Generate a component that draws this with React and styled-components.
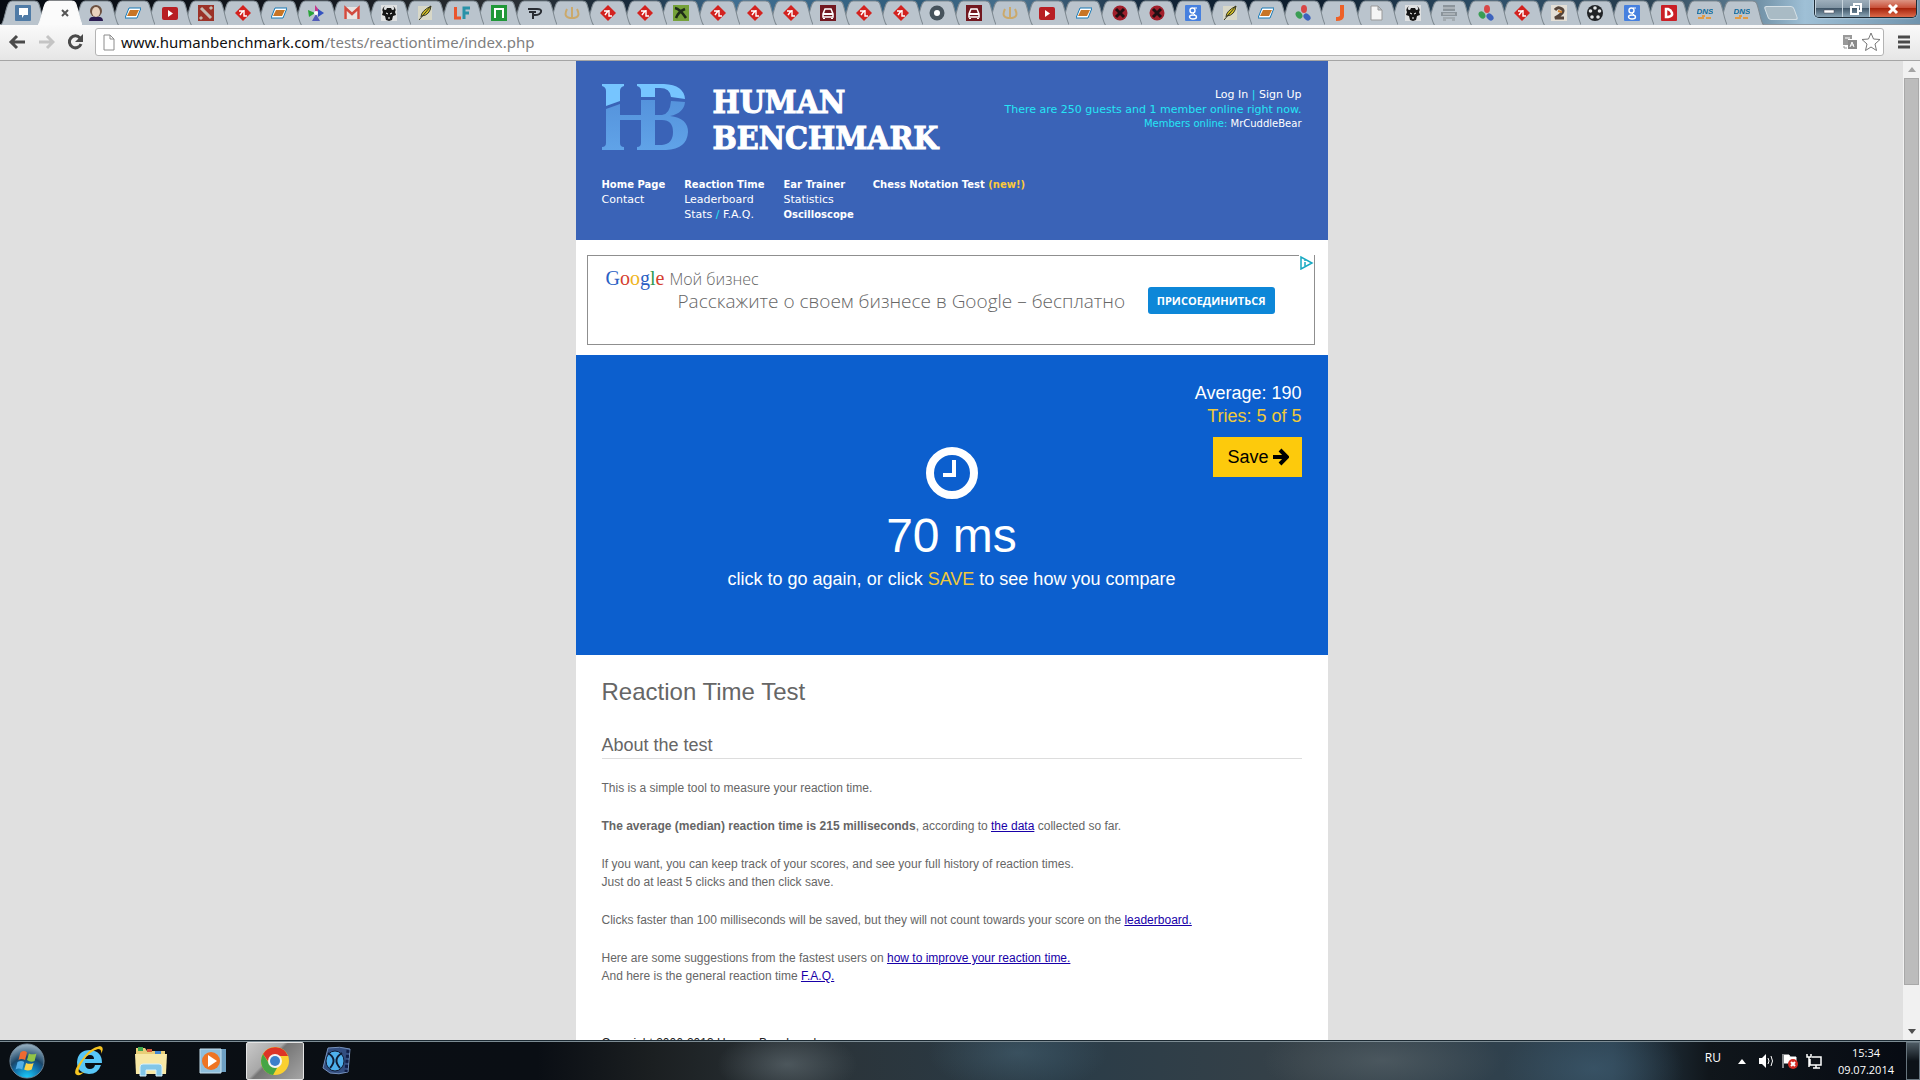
import React from 'react'
import styled, { createGlobalStyle, css } from 'styled-components'

const GlobalStyle = createGlobalStyle`
    * { box-sizing: border-box; }
    body {
        margin: 0;
        overflow: hidden;
        font-family: "Liberation Sans", Arial, sans-serif;
    }
    button { font-family: inherit; }
    h1, h2, p, ul { margin: 0; padding: 0; }
`

const Screen = styled.div`
    display: flex;
    flex-direction: column;
    height: 100vh;
    background: #e0e0e0;
`

/* ---------- tab strip ---------- */

const TabStrip = styled.header`
    display: flex;
    justify-content: space-between;
    height: 25px;
    flex: none;
    padding-left: 5px;
    border-bottom: 1px solid #8f979e;
    background: linear-gradient(90deg, #060b12 0%, #15191f 17%, #2b2f33 26%, #182b3c 33%, #3f6f92 38%, #2f5c7a 48%, #4a7390 53%, #122538 60%, #0d1c2b 68%, #30526c 78%, #243a4b 85%, #547388 90%, #9fc0d6 94%, #6f93ad 100%);
`
const Tabs = styled.nav`
    display: flex;
    flex: 1;
`
const TabButton = styled.button`
    position: relative;
    z-index: ${p => p.$order};
    flex: 1 1 0;
    min-width: 0;
    height: 24px;
    padding: 2px 0 0;
    border: 0;
    background: none;
    display: flex;
    align-items: center;
    justify-content: center;
`
const TabShape = styled.svg`
    position: absolute;
    left: -4px;
    top: 0;
    width: calc(100% + 8px);
    height: 25px;
`
const Favicon = styled.svg`
    position: relative;
    flex: none;
    width: 16px;
    height: 16px;
    margin-left: ${p => p.$active ? '10px' : '0'};
`
const NewTab = styled.button`
    width: 30px;
    height: 14px;
    margin: 6px 18px 0 6px;
    border: 1px solid #d5e0e6;
    border-radius: 3px;
    background: #a9bbc5;
    transform: skewX(20deg);
`
const WindowButtons = styled.div`
    display: flex;
    height: 18px;
    margin-right: 3px;
    border: 1px solid #1d2b36;
    border-top: 0;
    border-radius: 0 0 5px 5px;
    overflow: hidden;
    box-shadow: 0 0 2px #dfeaf2;
`
const WindowButton = styled.button`
    display: flex;
    align-items: center;
    justify-content: center;
    width: ${p => p.$close ? '47px' : '27px'};
    padding: 0;
    border: 0;
    border-left: 1px solid #c7d4dd;
    background: linear-gradient(#9eafbc 0, #8296a5 45%, #42586a 50%, #8ba5b6 100%);
    ${p => p.$close && css`
        background: linear-gradient(#dd9483 0, #c9513a 45%, #a8240c 50%, #dd6a4a 100%);
    `}
`

/* ---------- toolbar ---------- */

const Toolbar = styled.div`
    display: flex;
    align-items: center;
    flex: none;
    height: 36px;
    padding: 0 8px 1px;
    border-bottom: 1px solid #a5a5a5;
    background: linear-gradient(#fafafa, #e6e6e6);
`
const NavButton = styled.button`
    display: flex;
    width: 18px;
    height: 18px;
    margin-right: 11px;
    padding: 0;
    border: 0;
    background: none;
`
const AddressBar = styled.div`
    display: flex;
    align-items: center;
    flex: 1;
    height: 28px;
    padding: 0 2px 0 7px;
    border: 1px solid #b4b4b4;
    border-radius: 3px;
    background: #fff;
`
const Url = styled.a`
    flex: 1;
    margin-left: 6px;
    font: 15px/24px "Noto Sans", "Open Sans", sans-serif;
    color: #808080;
    text-decoration: none;
    b { font-weight: 400; color: #111; }
`
const BarButton = styled.button`
    display: flex;
    margin-left: 2px;
    padding: 0;
    border: 0;
    background: none;
`
const MenuButton = styled(BarButton)`
    margin-left: 12px;
`

/* ---------- page ---------- */

const Viewport = styled.div`
    display: flex;
    flex: 1;
    min-height: 0;
`
const Page = styled.main`
    flex: 1;
    overflow: hidden;
`
const Column = styled.div`
    max-width: 752px;
    margin: 0 auto;
    background: #fff;
`
const Scrollbar = styled.div`
    display: flex;
    flex-direction: column;
    width: 17px;
    background: #f1f1f1;
`
const ScrollArrow = styled.button`
    display: flex;
    align-items: center;
    justify-content: center;
    height: 17px;
    padding: 0;
    border: 0;
    background: none;
`
const ScrollTrack = styled.div`
    flex: 1;
    padding: 0 1px;
`
const ScrollThumb = styled.div`
    height: 96%;
    border: 1px solid #a8a8a8;
    background: #bcbcbc;
`

const Masthead = styled.header`
    padding: 23px 26px 9px;
    background: #3a63b7;
    color: #25e6f5;
    font: 11px/15px Verdana, "DejaVu Sans", sans-serif;
    a { color: #fff; text-decoration: none; }
`
const MastheadTop = styled.div`
    display: flex;
    justify-content: space-between;
`
const Brand = styled.a`
    display: flex;
    gap: 24px;
`
const BrandName = styled.span`
    color: #fff;
    font: bold 32px/36px "DejaVu Serif Condensed", "DejaVu Serif", serif;
    -webkit-text-stroke: 1px #fff;
`
const Account = styled.div`
    padding-top: 3px;
    text-align: right;
`
const Members = styled.div`
    font-size: 10px;
    line-height: 13px;
`
const Menu = styled.nav`
    display: flex;
    gap: 19px;
    margin-top: 21px;
    min-height: 54px;
`
const MenuColumn = styled.ul`
    list-style: none;
`
const MenuItem = styled.li`
    font-size: ${p => p.$bold ? '10px' : '11px'};
    font-weight: ${p => p.$bold ? 'bold' : 'normal'};
    em { font-style: normal; color: #fbc93c; }
`

const AdSlot = styled.aside`
    padding: 15px 13px 10px 11px;
`
const Ad = styled.div`
    position: relative;
    display: flex;
    align-items: flex-start;
    height: 90px;
    padding: 10px 39px 0 18px;
    border: 1px solid #8f8f8f;
    font-family: "Open Sans", "Noto Sans", sans-serif;
    font-weight: 300;
    color: #666;
`
const AdText = styled.div`
    flex: 1;
    white-space: nowrap;
`
const AdBrand = styled.div`
    display: flex;
    align-items: baseline;
    gap: 5px;
    font-size: 16px;
    line-height: 24px;
`
const GoogleWord = styled.span`
    font: 20px/24px "Liberation Serif", serif;
`
const Letter = styled.span`
    color: ${p => p.$color};
`
const AdLine = styled.div`
    padding-left: 72px;
    font-size: 19px;
    line-height: 20px;
`
const JoinButton = styled.button`
    height: 27px;
    margin-top: 21px;
    padding: 0 9px;
    border: 0;
    border-radius: 3px;
    background: #0d87d8;
    color: #fff;
    font: bold 11px "Open Sans", "Noto Sans", sans-serif;
`
const AdChoices = styled.svg`
    position: absolute;
    right: 0;
    top: -1px;
    width: 15px;
    height: 15px;
    background: #fff;
`

const Stage = styled.section`
    height: 300px;
    padding: 27px 26px 26px;
    background: #0c5fce;
    color: #fff;
    font-size: 18px;
    line-height: 23px;
`
const Score = styled.div`
    display: flex;
    flex-direction: column;
    align-items: flex-end;
    height: 65px;
`
const Gold = styled.span`
    color: #f0c93a;
`
const SaveButton = styled.button`
    display: flex;
    align-items: center;
    gap: 4px;
    flex: none;
    height: 40px;
    margin-top: 9px;
    padding: 0 13px 0 14px;
    border: 0;
    background: #fdca0c;
    color: #000;
    font-size: 18px;
`
const Result = styled.div`
    display: flex;
    flex-direction: column;
    align-items: center;
`
const Time = styled.div`
    margin: 9px 0 4px;
    font-size: 48px;
    line-height: 56px;
`

const Article = styled.article`
    padding: 24px 26px 0;
    color: #666;
    font-size: 12px;
    line-height: 18px;
    a { color: #1800a8; }
`
const Title = styled.h1`
    font-size: 24px;
    font-weight: 400;
    line-height: 26px;
`
const Subtitle = styled.h2`
    margin: 28px 0 20px;
    padding-bottom: 1px;
    border-bottom: 1px solid #ddd;
    font-size: 18px;
    font-weight: 400;
    line-height: 24px;
`
const Paragraph = styled.p`
    margin-bottom: 20px;
`
const Copyright = styled.footer`
    padding: 29px 0 40px;
    color: #222;
`

/* ---------- taskbar ---------- */

const Taskbar = styled.footer`
    display: flex;
    align-items: center;
    flex: none;
    height: 40px;
    padding-left: 8px;
    border-top: 1px solid #1c2a33;
    box-shadow: inset 0 1px #7d8c94;
    color: #fff;
    background:
        radial-gradient(ellipse 70px 34px at 41% 60%, #64707699, transparent),
        radial-gradient(ellipse 90px 40px at 53% 30%, #51728566, transparent),
        radial-gradient(ellipse 120px 40px at 72% 50%, #5a666c99, transparent),
        radial-gradient(ellipse 90px 50px at 83% 70%, #3f5d7299, transparent),
        linear-gradient(90deg, #0a0f14 0, #0a0e14 28%, #1b1f21 34%, #2b3338 42%, #2a3c48 55%, #364148 68%, #2c4150 84%, #10161b 89%, #060a12 100%);
`
const TaskButton = styled.button`
    display: flex;
    align-items: center;
    justify-content: center;
    width: ${p => p.$start ? '38px' : '58px'};
    margin-right: ${p => p.$start ? '14px' : '4px'};
    height: 38px;
    padding: 0;
    border: 1px solid transparent;
    border-radius: 2px;
    background: none;
    ${p => p.$active && css`
        border-color: #e5e5e5;
        background: linear-gradient(135deg, #c9c9c9 0, #a8a8a8 40%, #757575 45%, #a5a5a5 100%);
    `}
`
const Tray = styled.div`
    display: flex;
    align-items: center;
    margin-left: auto;
    gap: 8px;
    font: 12px/17px "Open Sans", "Noto Sans", sans-serif;
`
const Language = styled.span`
    margin: 0 5px 6px 0;
`
const Clock = styled.time`
    margin-left: 8px;
    text-align: center;
    font-size: 11px;
`
const ShowDesktop = styled.button`
    width: 14px;
    height: 38px;
    margin-left: 4px;
    padding: 0;
    border: 1px solid #67757e;
    background: linear-gradient(#4d5a63, #0c1218 50%);
`

/* ---------- drawings ---------- */

const favicons = {
    chat: <><rect width="16" height="16" rx="1" fill="#4f7ba6" /><path d="M4 3h9v7H9l-2 3v-3H4z" fill="#fff" /></>,
    close: <path d="M5 5l6 6M11 5l-6 6" stroke="#555" strokeWidth="2" />,
    avatar: <><ellipse cx="8" cy="6" rx="6" ry="6" fill="#6d5140" /><ellipse cx="8" cy="7" rx="4" ry="5" fill="#ead3be" /><path d="M1 16q0-5 7-4 7-1 7 4z" fill="#2a1b50" /></>,
    slab: <><path d="M4 3h12l-4 10H0z" fill="#fff" stroke="#1678b5" /><path d="M5 5h9l-3 6H2z" fill="#c87525" /></>,
    tube: <><rect y="2" width="16" height="13" rx="2" fill="#b81f24" /><path d="M6 5l5 3.500-5 3.500z" fill="#fff" /></>,
    dota: <><rect width="16" height="16" fill="#9b3228" /><path d="M3 3l10 10M12 2l2 2M2 12l2 2" stroke="#c6bbb2" strokeWidth="3" /></>,
    ruby: <><path d="M8 0l8 8-8 8-8-8z" fill="#d3221f" /><path d="M4 6h4l-3 4M9 5v6h3" stroke="#fff" strokeWidth="1.400" fill="none" /></>,
    spark: <><path d="M7 0l4 5-4 3z" fill="#c43a8b" /><path d="M0 5l7 3-6 4z" fill="#28a438" /><path d="M10 4l6 4-6 4z" fill="#3452c0" /><path d="M4 16l4-7 4 7z" fill="#525cb8" /><circle cx="8" cy="8" r="2" fill="#fff" /></>,
    mail: <><rect y="2" width="16" height="12" fill="#e8e4e2" /><path d="M1.500 14V3L8 9l6.500-6v11" fill="none" stroke="#d14b3f" strokeWidth="2.500" /></>,
    bull: <><rect width="16" height="16" fill="#dfe1e2" /><path d="M4 1Q1 5 5 5l1-2h4l1 2q4 0 1-4 4 3 2 6l1 3-3 1-1 4-3 1-3-1-1-4-3-1 1-3Q0 4 4 1z" fill="#151515" /><path d="M5 8l2 1M11 8L9 9M7 13h2" stroke="#fff" /></>,
    feather: <><rect x="1" y="1" width="14" height="14" fill="#d8d8c8" /><path d="M2 15L14 1M4 12q0-6 10-11-1 9-9 10" fill="#d5c125" stroke="#353622" /></>,
    lf: <><path d="M1.500 2v11H7" fill="none" stroke="#ea552d" strokeWidth="3" /><path d="M10 14V3h6M10 8h5" fill="none" stroke="#2892a8" strokeWidth="3" /></>,
    gate: <><rect width="16" height="16" fill="#209838" /><path d="M4 13V4h8v9M4 4h8" fill="none" stroke="#fff" strokeWidth="2" /></>,
    pen: <path d="M1 4h9q5 0 4 3-1 3-6 3H5M2 7h7M6 8v6" fill="none" stroke="#292d33" strokeWidth="2" />,
    crown: <path d="M3 4q-4 8 3 9h4q7-1 3-9M8 2v10" fill="none" stroke="#cba96b" strokeWidth="2" />,
    cross: <><rect width="16" height="16" fill="#75a139" /><path d="M2 3q5 1 11 10M3 13q2-6 9-9" stroke="#1e2c19" strokeWidth="2.500" fill="none" /></>,
    car: <><rect width="16" height="16" fill="#721820" /><path d="M5 4h6l2 5v3H3V9z" fill="none" stroke="#fff" strokeWidth="1.500" /><path d="M4 13v1M12 13v1M3 9h10" stroke="#fff" strokeWidth="2" /></>,
    ring: <><circle cx="8" cy="8" r="7.500" fill="#46535c" /><circle cx="8" cy="8" r="3" fill="#fff" /></>,
    bug: <><circle cx="8" cy="8" r="7.500" fill="#a11f2b" /><path d="M4 4l8 8M12 4l-8 8" stroke="#210f13" strokeWidth="3" /></>,
    gee: <><rect width="16" height="16" rx="1" fill="#4680df" /><circle cx="7.500" cy="5.500" r="2.500" fill="none" stroke="#fff" strokeWidth="1.400" /><ellipse cx="8" cy="12" rx="3.500" ry="2" fill="none" stroke="#fff" strokeWidth="1.400" /><path d="M9 3h3M8 8l2 2" stroke="#fff" /></>,
    petals: <><ellipse cx="9" cy="4" rx="3" ry="4" fill="#d84646" /><ellipse cx="4" cy="10" rx="3" ry="4" fill="#3a9d54" transform="rotate(-35 4 10)" /><ellipse cx="12" cy="12" rx="3" ry="4" fill="#3d63bd" transform="rotate(-45 12 12)" /></>,
    hook: <path d="M8 0h4v11q0 5-8 5v-4q4 0 4-2z" fill="#ee6127" />,
    sheet: <path d="M3 1h7l4 4v10H3zM10 1v4h4" fill="#f5f5f5" stroke="#999" />,
    cart: <><path d="M2 0h12v6H2zM0 7h16v4H0z" fill="#8b949b" /><path d="M2 3h12M2 9h12" stroke="#c9ced2" /><path d="M2 12h12v4h-3v-2H5v2H2z" fill="#a3abb1" /></>,
    snake: <><rect width="16" height="16" fill="#e4dfd6" /><path d="M4 5q3-4 7-1t-7 9h9" fill="none" stroke="#54443a" strokeWidth="3" /><path d="M7 6l4 1" stroke="#d5832c" strokeWidth="2" /></>,
    film: <><circle cx="8" cy="8" r="8" fill="#202326" />{[[8, 3], [12.5, 6], [11, 12], [5, 12], [3.5, 6]].map(([x, y]) => <circle key={x} cx={x} cy={y} r="1.800" fill="#e2e5e7" />)}</>,
    dee: <><rect width="16" height="16" rx="1" fill="#ca1f26" /><path d="M5 4v8h2q5-1 4-4t-4-4z" fill="none" stroke="#fff" strokeWidth="2.500" /></>,
    dns: <><text x="8" y="9" textAnchor="middle" fontSize="8" fontWeight="bold" fontStyle="italic" fontFamily="Liberation Sans, sans-serif" fill="#0e6a9c">DNS</text><path d="M1 13h6M9 13h5M5 11h3" stroke="#e29b45" strokeWidth="2" /></>,
}

const tabs = [
    ['chat', 'Messages'], ['close', 'Reaction Time Test'], ['avatar', 'Profile'], ['slab', 'Board'],
    ['tube', 'Video'], ['dota', 'Game'], ['ruby', 'News'], ['slab', 'Board'], ['spark', 'Gallery'],
    ['mail', 'Mail'], ['bull', 'Forum'], ['feather', 'Notes'], ['lf', 'Films'], ['gate', 'Portal'],
    ['pen', 'Blog'], ['crown', 'Shop'], ['ruby', 'News'], ['ruby', 'News'], ['cross', 'Match'],
    ['ruby', 'News'], ['ruby', 'News'], ['ruby', 'News'], ['car', 'Cars'], ['ruby', 'News'],
    ['ruby', 'News'], ['ring', 'Player'], ['car', 'Cars'], ['crown', 'Shop'], ['tube', 'Video'],
    ['slab', 'Board'], ['bug', 'Tracker'], ['bug', 'Tracker'], ['gee', 'Search'], ['feather', 'Notes'],
    ['slab', 'Board'], ['petals', 'Photos'], ['hook', 'Journal'], ['sheet', 'Page'], ['bull', 'Forum'],
    ['cart', 'Cart'], ['petals', 'Photos'], ['ruby', 'News'], ['snake', 'Stories'], ['film', 'Cinema'],
    ['gee', 'Search'], ['dee', 'Daily'], ['dns', 'Store'], ['dns', 'Store'],
]

const Tab = ({ icon, label, order, active }) => (
    <TabButton $order={active ? 60 : order} aria-label={label}>
        <TabShape viewBox="0 0 44 25" preserveAspectRatio="none">
            <path
                d="M0 25C3 23 5 5 8 2.500Q9 1 11 1H33Q36 1 37 3C40 10 41 22 44 25"
                fill={active ? '#fbfbfb' : '#bac4cd'}
                stroke={active ? '#fbfbfb' : '#7e8991'}
            />
        </TabShape>
        <Favicon $active={active} viewBox="0 0 16 16">{favicons[icon]}</Favicon>
    </TabButton>
)

const HbMark = () => (
    <svg width="87" height="66" viewBox="0 0 87 66">
        <defs>
            <linearGradient id="low" x1="0" y1="0" x2="0" y2="1">
                <stop offset="0" stopColor="#5593dc" />
                <stop offset="1" stopColor="#60a3e8" />
            </linearGradient>
        </defs>
        <path fill="#76c5ff" d="M0 0H22V2Q18 3 18 7V17L4 22V7Q4 3 0 2zM35 0H62Q82 1 83 15L69 13Q68 4 58 4H53V13H39V7Q39 3 35 2z" />
        <path fill="url(#low)" d="M4 25L18 20V31H39V16H53V31H60Q68 30 69 17L83 18Q82 29 68 32Q86 34 86 48Q85 65 64 66H35V63Q39 63 39 59V36H18V59Q18 63 22 63V66H0V63Q4 63 4 59zM53 36V61H60Q71 60 71 48Q71 36 60 36z" />
    </svg>
)

const TaskIcon = ({ name }) => {
    switch (name) {
        case 'start':
            return (
                <svg width="38" height="38" viewBox="0 0 38 38">
                    <defs>
                        <radialGradient id="orb" cx=".5" cy="1" r="1">
                            <stop offset="0" stopColor="#19d0ff" />
                            <stop offset=".45" stopColor="#13659d" />
                            <stop offset=".6" stopColor="#1b4668" />
                            <stop offset="1" stopColor="#9db5c5" />
                        </radialGradient>
                    </defs>
                    <circle cx="19" cy="19" r="18" fill="url(#orb)" stroke="#71899a" />
                    <path d="M12 10q4-3 7 0l-2 8q-4-2-7 0z" fill="#ee6a31" />
                    <path d="M21 11q4 2 8 0l-2 8q-4 2-8-1z" fill="#92c447" />
                    <path d="M9 20q4-2 7 0l-2 8q-4-2-7 0z" fill="#52aee8" />
                    <path d="M18 21q4 2 8 0l-2 7q-4 2-8 0z" fill="#fbd34a" />
                </svg>
            )
        case 'explorer':
            return (
                <svg width="32" height="32" viewBox="0 0 32 32">
                    <path d="M28 20q-3 9-12 9-12-1-12-12Q5 5 17 5q12 1 12 13H12q0 6 5 6 4 0 5-4zM12 14h9q0-4-4-4t-5 4z" fill="#58c7f7" />
                    <path d="M4 30q-5-2 3-13Q17 2 27 1q5 1 1 8 1-5-3-5-8 2-15 12-7 11-3 12 3 0 5-2-4 5-8 4z" fill="#f6c421" />
                </svg>
            )
        case 'folder':
            return (
                <svg width="34" height="32" viewBox="0 0 34 32">
                    <path d="M2 3h9l2 3h18v23H2z" fill="#e9cf77" />
                    <path d="M4 2h5v4H4z" fill="#3da54e" /><path d="M13 4h5v3h-5z" fill="#d4573a" /><path d="M21 6h6v3h-6z" fill="#4386cf" />
                    <path d="M1 9h32l-1 20H2z" fill="#f8e8a5" />
                    <path d="M6 31V22q0-3 3-3h16q3 0 3 3v9h-6v-6H12v6z" fill="#82c6e8" stroke="#d8f1fa" />
                </svg>
            )
        case 'media':
            return (
                <svg width="28" height="28" viewBox="0 0 28 28">
                    <path d="M5 2h22v23H5z" fill="#6d9fc2" /><path d="M1 2h21v24H1z" fill="#8fbfdc" stroke="#c6e0ee" />
                    <circle cx="12" cy="14" r="9" fill="#ee7423" /><path d="M9 8l9 6-9 6z" fill="#fff" />
                </svg>
            )
        case 'chrome':
            return (
                <svg width="30" height="30" viewBox="0 0 30 30">
                    <circle cx="15" cy="15" r="14" fill="#fad02f" />
                    <path d="M3 8a14 14 0 0 1 25 2H15L10 18z" fill="#dd3427" />
                    <path d="M3 8l7 11 7 3-4 7A14 14 0 0 1 3 8z" fill="#45a546" />
                    <circle cx="15" cy="15" r="7" fill="#f4f4f4" /><circle cx="15" cy="15" r="5" fill="#3c7fcb" />
                </svg>
            )
        case 'clip':
            return (
                <svg width="30" height="30" viewBox="0 0 30 30">
                    <path d="M6 2q12-2 22 1l-2 23q-9 3-18 1L1 22z" fill="#334e80" stroke="#7590bb" />
                    <path d="M26 4l-2 22" stroke="#101d46" strokeWidth="3" strokeDasharray="3 2" />
                    <ellipse cx="13" cy="15" rx="9" ry="10" fill="#4fb0ed" stroke="#101c34" />
                    <path d="M6 7q10 6 2 15M20 7q-10 6-2 15" fill="none" stroke="#101c34" strokeWidth="2" />
                </svg>
            )
        default:
            return null
    }
}

const tasks = ['explorer', 'folder', 'media', 'chrome', 'clip']
const googleLetters = [['G', '#2a5fc4'], ['o', '#d5402f'], ['o', '#efb421'], ['g', '#2a5fc4'], ['l', '#2f9b52'], ['e', '#d5402f']]

const BrowserChrome = () => (
    <>
        <TabStrip>
            <Tabs>
                {tabs.map(([icon, label], i) => (
                    <Tab key={i} icon={icon} label={label} order={50 - i} active={icon === 'close'} />
                ))}
            </Tabs>
            <NewTab aria-label="New tab" />
            <WindowButtons>
                <WindowButton aria-label="Minimize">
                    <svg width="12" height="12"><path d="M1 7h10v3H1z" fill="#fff" stroke="#445" strokeWidth=".5" /></svg>
                </WindowButton>
                <WindowButton aria-label="Restore">
                    <svg width="12" height="12"><path d="M4 3V1h7v7H9M1 4h7v7H1z" fill="none" stroke="#fff" strokeWidth="2" /></svg>
                </WindowButton>
                <WindowButton $close aria-label="Close">
                    <svg width="12" height="12"><path d="M2 2l8 8M10 2l-8 8" stroke="#fff" strokeWidth="3" /></svg>
                </WindowButton>
            </WindowButtons>
        </TabStrip>
        <Toolbar>
            <NavButton aria-label="Back">
                <svg width="18" height="18"><path d="M17 9H3M9 3L3 9l6 6" fill="none" stroke="#4a4a4a" strokeWidth="3" /></svg>
            </NavButton>
            <NavButton aria-label="Forward">
                <svg width="18" height="18"><path d="M2 9h14M10 3l6 6-6 6" fill="none" stroke="#c4c4c4" strokeWidth="3" /></svg>
            </NavButton>
            <NavButton aria-label="Reload">
                <svg width="18" height="18"><path d="M14 5a6 6 0 1 0 1 6" fill="none" stroke="#4a4a4a" strokeWidth="3" /><path d="M17 1v8H9z" fill="#4a4a4a" /></svg>
            </NavButton>
            <AddressBar>
                <svg width="12" height="17"><path d="M1 1h6l4 4v11H1zM7 1v4h4" fill="#fff" stroke="#8c8c8c" /></svg>
                <Url href="#"><b>www.humanbenchmark.com</b>/tests/reactiontime/index.php</Url>
                <BarButton aria-label="Translate">
                    <svg width="18" height="18">
                        <path d="M2 2h9v4H7v6H2z" fill="#999" /><path d="M7 7h9v9H7z" fill="#8a8a8a" />
                        <path d="M4 5h5M9 14l2-5 2 5M10 12h3" stroke="#fff" fill="none" /><path d="M3 13v2h3" stroke="#999" fill="none" />
                    </svg>
                </BarButton>
                <BarButton aria-label="Bookmark">
                    <svg width="20" height="20"><path d="M10 1l2.500 6 6.500.5-5 4.500 1.500 6.500L10 15l-5.500 3.500L6 12 1 7.500 7.500 7z" fill="#fff" stroke="#777" /></svg>
                </BarButton>
            </AddressBar>
            <MenuButton aria-label="Menu">
                <svg width="16" height="14"><path d="M2 2h12M2 7h12M2 12h12" stroke="#4a4a4a" strokeWidth="3" /></svg>
            </MenuButton>
        </Toolbar>
    </>
)

const SiteHeader = () => (
    <Masthead>
        <MastheadTop>
            <Brand href="#">
                <HbMark />
                <BrandName>HUMAN<br />BENCHMARK</BrandName>
            </Brand>
            <Account>
                <div><a href="#">Log In</a> | <a href="#">Sign Up</a></div>
                <div>There are 250 guests and 1 member online right now.</div>
                <Members>Members online: <a href="#">MrCuddleBear</a></Members>
            </Account>
        </MastheadTop>
        <Menu>
            <MenuColumn>
                <MenuItem $bold><a href="#">Home Page</a></MenuItem>
                <MenuItem><a href="#">Contact</a></MenuItem>
            </MenuColumn>
            <MenuColumn>
                <MenuItem $bold><a href="#">Reaction Time</a></MenuItem>
                <MenuItem><a href="#">Leaderboard</a></MenuItem>
                <MenuItem><a href="#">Stats</a> / <a href="#">F.A.Q.</a></MenuItem>
            </MenuColumn>
            <MenuColumn>
                <MenuItem $bold><a href="#">Ear Trainer</a></MenuItem>
                <MenuItem><a href="#">Statistics</a></MenuItem>
                <MenuItem $bold><a href="#">Oscilloscope</a></MenuItem>
            </MenuColumn>
            <MenuColumn>
                <MenuItem $bold><a href="#">Chess Notation Test <em>(new!)</em></a></MenuItem>
            </MenuColumn>
        </Menu>
    </Masthead>
)

const Banner = () => (
    <AdSlot>
        <Ad>
            <AdText>
                <AdBrand>
                    <GoogleWord>
                        {googleLetters.map(([char, color], i) => <Letter key={i} $color={color}>{char}</Letter>)}
                    </GoogleWord>
                    Мой бизнес
                </AdBrand>
                <AdLine>Расскажите о своем бизнесе в Google – бесплатно</AdLine>
            </AdText>
            <JoinButton>ПРИСОЕДИНИТЬСЯ</JoinButton>
            <AdChoices viewBox="0 0 15 15">
                <path d="M2 2v12l11-6z" fill="none" stroke="#17a9c2" strokeWidth="1.500" />
                <path d="M6 5v1M6 7v4" stroke="#17a9c2" strokeWidth="1.500" />
            </AdChoices>
        </Ad>
    </AdSlot>
)

const ReactionTest = () => (
    <Stage>
        <Score>
            <span>Average: 190</span>
            <Gold>Tries: 5 of 5</Gold>
            <SaveButton>
                Save
                <svg width="16" height="18" viewBox="0 0 16 18"><path d="M0 9h12M7 2l7 7-7 7" fill="none" stroke="#000" strokeWidth="4" /></svg>
            </SaveButton>
        </Score>
        <Result>
            <svg width="52" height="52" viewBox="0 0 52 52">
                <circle cx="26" cy="26" r="22" fill="none" stroke="#fff" strokeWidth="8" />
                <path d="M28 13v15H17" fill="none" stroke="#fff" strokeWidth="4" />
            </svg>
            <Time>70 ms</Time>
            <div>click to go again, or click <Gold>SAVE</Gold> to see how you compare</div>
        </Result>
    </Stage>
)

const About = () => (
    <Article>
        <Title>Reaction Time Test</Title>
        <Subtitle>About the test</Subtitle>
        <Paragraph>This is a simple tool to measure your reaction time.</Paragraph>
        <Paragraph>
            <b>The average (median) reaction time is 215 milliseconds</b>, according to <a href="#">the data</a> collected so far.
        </Paragraph>
        <Paragraph>
            If you want, you can keep track of your scores, and see your full history of reaction times.<br />
            Just do at least 5 clicks and then click save.
        </Paragraph>
        <Paragraph>
            Clicks faster than 100 milliseconds will be saved, but they will not count towards your score on the <a href="#">leaderboard.</a>
        </Paragraph>
        <Paragraph>
            Here are some suggestions from the fastest users on <a href="#">how to improve your reaction time.</a><br />
            And here is the general reaction time <a href="#">F.A.Q.</a>
        </Paragraph>
        <Copyright>Copyright 2006-2013 Human Benchmark</Copyright>
    </Article>
)

const WindowsTaskbar = () => (
    <Taskbar>
        <TaskButton $start aria-label="Start"><TaskIcon name="start" /></TaskButton>
        {tasks.map(name => (
            <TaskButton key={name} $active={name === 'chrome'} aria-label={name}><TaskIcon name={name} /></TaskButton>
        ))}
        <Tray>
            <Language>RU</Language>
            <svg width="16" height="16"><path d="M4 11l4-5 4 5z" fill="#fff" /></svg>
            <svg width="16" height="16"><path d="M1 5h3l4-4v14l-4-4H1z" fill="#fff" /><path d="M10 5q2 3 0 6M13 3q3 5 0 10" fill="none" stroke="#fff" /></svg>
            <svg width="16" height="16"><path d="M1 1v14M2 2h5l1 2h6v6H2" fill="#fff" stroke="#fff" /><circle cx="11" cy="11" r="5" fill="#d32a22" /><path d="M9 9l4 4M13 9l-4 4" stroke="#fff" strokeWidth="2" /></svg>
            <svg width="16" height="16"><path d="M6 4h9v8H4V6M7 15h7M10 12v3M1 1v3h4V1M3 4v10" fill="none" stroke="#fff" strokeWidth="1.500" /></svg>
            <Clock dateTime="2014-07-09T15:34">15:34<br />09.07.2014</Clock>
            <ShowDesktop aria-label="Show desktop" />
        </Tray>
    </Taskbar>
)

const App = () => (
    <Screen>
        <GlobalStyle />
        <BrowserChrome />
        <Viewport>
            <Page>
                <Column>
                    <SiteHeader />
                    <Banner />
                    <ReactionTest />
                    <About />
                </Column>
            </Page>
            <Scrollbar>
                <ScrollArrow aria-label="Scroll up"><svg width="8" height="5"><path d="M0 5l4-5 4 5z" fill="#a3a3a3" /></svg></ScrollArrow>
                <ScrollTrack><ScrollThumb /></ScrollTrack>
                <ScrollArrow aria-label="Scroll down"><svg width="8" height="5"><path d="M0 0h8L4 5z" fill="#505050" /></svg></ScrollArrow>
            </Scrollbar>
        </Viewport>
        <WindowsTaskbar />
    </Screen>
)

export default App
